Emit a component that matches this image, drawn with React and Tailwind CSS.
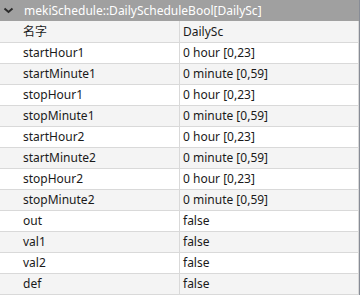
import React from 'react';

const rows = [
  ['startHour1', '0 hour [0,23]'],
  ['startMinute1', '0 minute [0,59]'],
  ['stopHour1', '0 hour [0,23]'],
  ['stopMinute1', '0 minute [0,59]'],
  ['startHour2', '0 hour [0,23]'],
  ['startMinute2', '0 minute [0,59]'],
  ['stopHour2', '0 hour [0,23]'],
  ['stopMinute2', '0 minute [0,59]'],
  ['out', 'false'],
  ['val1', 'false'],
  ['val2', 'false'],
  ['def', 'false'],
];

const Row = ({ name, value, gray, tall }) => (
  <div
    className={`flex border-b border-[#d9d9d9] ${tall ? 'h-[22px]' : 'h-[21px]'} ${gray ? 'bg-[#f4f4f4]' : 'bg-white'}`}
  >
    <div className="w-[180px] shrink-0 border-r border-[#d9d9d9] pl-[23px] flex items-center">
      <span className="leading-5">{name}</span>
    </div>
    <div className="flex-1 border-r border-[#d9d9d9] pl-[3px] flex items-center">
      <span className="leading-5">{value}</span>
    </div>
  </div>
);

const App = () => {
  return (
    <div
      className="w-[360px] h-[295px] overflow-hidden bg-white border-r border-[#878c96] text-[12px] text-[#1a1a1a]"
      style={{ fontFamily: '"Noto Sans", "Noto Sans CJK SC", sans-serif' }}
    >
      <div className="h-[21px] bg-[#a0a0a0] flex items-center text-white">
        <svg width="24" height="21" viewBox="0 0 24 21" className="shrink-0">
          <path d="M4.5 8.5 L8.5 12 L12.5 8.5" fill="none" stroke="#2b2b2b" strokeWidth="2" />
        </svg>
        <span className="leading-5 whitespace-nowrap">mekiSchedule::DailyScheduleBool[DailySc]</span>
      </div>
      <Row name="名字" value="DailySc" gray tall />
      {rows.map(([name, value], i) => (
        <Row key={name} name={name} value={value} gray={i % 2 === 1} />
      ))}
    </div>
  );
};

export default App;
